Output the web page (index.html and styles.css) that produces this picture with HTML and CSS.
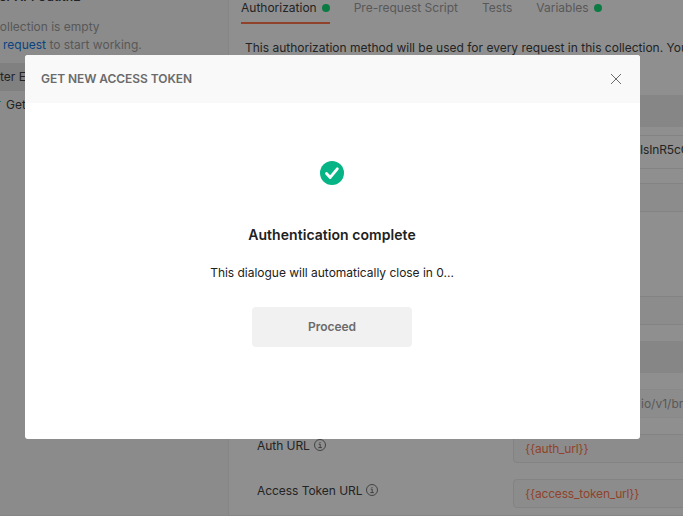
FILE: index.html
```html
<!DOCTYPE html>
<html lang="en">
<head>
<meta charset="utf-8">
<title>Get new access token</title>
<link rel="stylesheet" href="styles.css">
</head>
<body>
<div class="workspace">
  <aside class="sidebar">
    <div class="collection-name"><span>ter API Oauth2</span></div>
    <p class="empty"><span>collection is empty</span></p>
    <p class="empty second"><a>request</a> <span>to start working.</span></p>
    <div class="tree-row selected"><span>ter Ex</span></div>
    <div class="tree-row"><i class="method">T</i><span>Get</span></div>
  </aside>
  <main class="main">
    <nav class="tabs">
      <div class="tab active"><span>Authorization</span><i class="dot"></i></div>
      <div class="tab"><span>Pre-request Script</span></div>
      <div class="tab"><span>Tests</span></div>
      <div class="tab"><span>Variables</span><i class="dot"></i></div>
    </nav>
    <p class="description"><span>This authorization method will be used for every request in this collection. You</span></p>
    <div class="band first"></div>
    <div class="field token"><span>IsInR5cCI</span></div>
    <div class="field prefix"></div>
    <div class="field name"></div>
    <div class="band second"></div>
    <div class="field callback"><span>io/v1/browser</span></div>
    <div class="form-row auth">
      <label><span>Auth URL</span>
        <svg class="info" viewBox="0 0 12 12"><circle cx="6" cy="6" r="5.5"/><path d="M4.7 5.2H6.2V8.6M4.3 8.6H7.9M6 3V4.1"/></svg>
      </label>
      <div class="field var"><span>{{auth_url}}</span></div>
    </div>
    <div class="form-row">
      <label><span>Access Token URL</span>
        <svg class="info" viewBox="0 0 12 12"><circle cx="6" cy="6" r="5.5"/><path d="M4.7 5.2H6.2V8.6M4.3 8.6H7.9M6 3V4.1"/></svg>
      </label>
      <div class="field var"><span>{{access_token_url}}</span></div>
    </div>
  </main>
</div>
<section class="modal" role="dialog">
  <header class="modal-header">
    <h1>GET NEW ACCESS TOKEN</h1>
    <svg class="close" viewBox="0 0 12 12"><path d="M1 1L11 11M11 1L1 11"/></svg>
  </header>
  <div class="modal-body">
    <svg class="check" viewBox="0 0 24 24"><circle cx="12" cy="12" r="12"/><path d="M6.5 12.6L10.2 16.4L17.3 7.8"/></svg>
    <h2>Authentication complete</h2>
    <p>This dialogue will automatically close in 0...</p>
    <button>Proceed</button>
  </div>
</section>
</body>
</html>
```
FILE: styles.css
```css
* { box-sizing: border-box; }
body {
  margin: 0;
  width: 683px;
  height: 516px;
  overflow: hidden;
  position: relative;
  font: 12px/16px Inter, "Liberation Sans", sans-serif;
  color: #232323;
}
p, h1, h2 { margin: 0; font-size: 12px; }
span { white-space: nowrap; }

.workspace { display: flex; height: 516px; border-bottom: 1px solid #858585; }
.sidebar {
  width: 229px;
  flex: none;
  overflow: hidden;
  background: #8b8b8b;
  border-right: 1px solid #858585;
}
.collection-name { height: 19px; margin-top: -11px; margin-left: -5px; font-weight: 600; letter-spacing: .1px; }
.empty { height: 18px; margin-top: 11px; margin-left: -7px; color: #585858; }
.empty.second { margin-top: 0; margin-left: 3px; }
.empty a { color: #0a4380; }
.tree-row { display: flex; height: 28px; align-items: center; }
.tree-row.selected { margin-top: 8px; background: #808080; }
.method { margin-left: -5px; margin-right: 5px; font: 600 9px/16px Inter, sans-serif; color: #0a7048; }

.main { flex: 1; min-width: 0; overflow: hidden; background: #8f8f8f; }
.tabs { display: flex; gap: 24px; height: 24px; margin-left: 12px; }
.tab { display: flex; gap: 5px; height: 24px; color: #585858; border-bottom: 2px solid transparent; }
.tab.active { color: #232323; border-bottom-color: #91422a; }
.dot { width: 8px; height: 8px; margin-top: 4px; border-radius: 50%; background: #0b7a43; }
.description { height: 16px; margin: 16px 0 0 16px; }
.band { height: 32px; margin-left: 12px; background: #868686; }
.band.first { margin-top: 39px; }
.band.second { margin-top: 16px; }
.field {
  height: 29px;
  margin-left: 284px;
  margin-right: -20px;
  border: 1px solid #838383;
  border-radius: 4px;
  background: #8c8c8c;
  display: flex;
  align-items: center;
}
.token { height: 34px; margin-top: 8px; padding: 0 0 4px 126px; background: #8f8f8f; letter-spacing: -.15px; }
.prefix { margin-top: 14px; }
.name { margin-top: 84px; }
.callback { margin-top: 16px; padding-left: 127px; color: #585858; border-color: #898989; }
.form-row { display: flex; align-items: flex-start; height: 45px; }
.form-row.auth { margin-top: 16px; }
.form-row label { display: flex; gap: 4px; width: 256px; margin-left: 28px; padding-top: 4px; letter-spacing: -.05px; }
.info { width: 12px; height: 12px; margin-top: 1px; fill: none; stroke: #303030; stroke-width: .8; }
.form-row .field { flex: 1; margin-left: 0; padding-left: 11px; color: #91422a; letter-spacing: -.17px; }

.modal {
  position: absolute;
  left: 25px;
  top: 55px;
  width: 615px;
  height: 384px;
  overflow: hidden;
  border-radius: 3px;
  background: #fff;
}
.modal-header {
  display: flex;
  justify-content: space-between;
  align-items: center;
  height: 48px;
  padding: 0 18px 0 16px;
  background: #f9f9f9;
}
.modal-header h1 { font-weight: 600; color: #6b6b6b; letter-spacing: -.06px; }
.close { width: 12px; height: 12px; fill: none; stroke: #6b6b6b; }
.modal-body { display: flex; flex-direction: column; align-items: center; padding: 58px 1px 0 0; }
.check { width: 24px; height: 24px; fill: #06b485; }
.check path { fill: none; stroke: #fff; stroke-width: 2.9; stroke-linecap: round; stroke-linejoin: round; }
h2 { margin-top: 40px; font-size: 14px; line-height: 20px; font-weight: 600; color: #212121; letter-spacing: .05px; }
.modal-body p { margin-top: 20px; color: #212121; letter-spacing: -.02px; }
button {
  width: 160px;
  height: 40px;
  margin-top: 26px;
  border: 0;
  border-radius: 4px;
  background: #f1f1f1;
  color: #6b6b6b;
  font: 600 12px/16px Inter, sans-serif;
}
```
